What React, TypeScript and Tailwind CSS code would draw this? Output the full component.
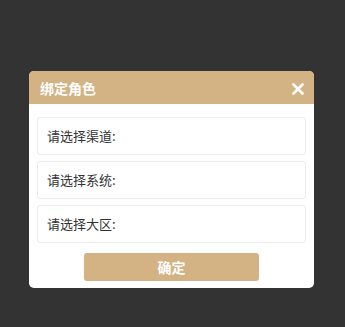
import React from "react";

const font = { fontFamily: '"Noto Sans CJK SC", "Noto Sans", sans-serif' };

export default function App() {
  const rows = ["请选择渠道:", "请选择系统:", "请选择大区:"];
  return (
    <div className="w-[345px] h-[327px] bg-[#333333] pt-[71px] pl-[29px]" style={font}>
      <div className="w-[285px] bg-white rounded-[5px] overflow-hidden">
        <div className="h-[33px] bg-[#d3b384] flex items-center justify-between pl-[11px] pr-[10px]">
          <span className="text-white text-[14px] font-bold leading-none">绑定角色</span>
          <svg width="12" height="12" viewBox="0 0 12 12" className="mt-[2px]">
            <path d="M1.5 1.5 L10.5 10.5 M10.5 1.5 L1.5 10.5" stroke="#fff" strokeWidth="2.6" strokeLinecap="round" />
          </svg>
        </div>
        <div className="px-[8px] pt-[13px] pb-[7px] flex flex-col">
          <div className="flex flex-col gap-[6px]">
            {rows.map((r) => (
              <div key={r} className="h-[38px] border border-[#ececec] rounded-[3px] flex items-center pl-[9px] text-[13px] text-[#333333]">
                {r}
              </div>
            ))}
          </div>
          <div className="flex justify-center mt-[10px]">
            <button className="w-[175px] h-[28px] bg-[#d3b384] rounded-[3px] text-white text-[14px] font-bold flex items-center justify-center">
              确定
            </button>
          </div>
        </div>
      </div>
    </div>
  );
}
